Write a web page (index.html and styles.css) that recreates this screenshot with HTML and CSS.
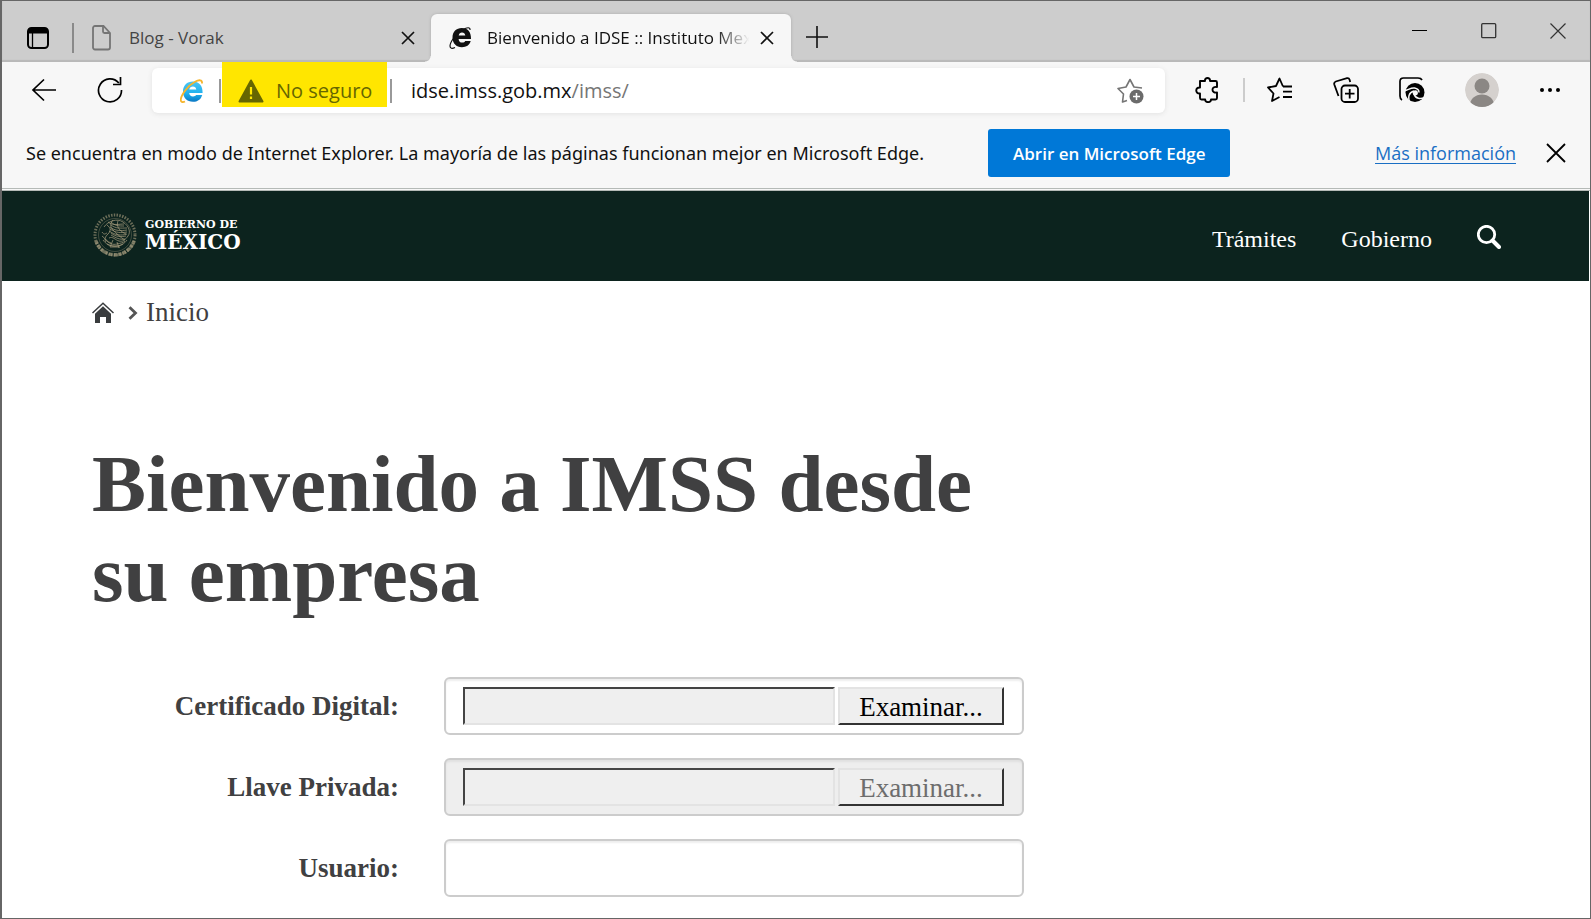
FILE: index.html
```html
<!DOCTYPE html>
<html lang="es">
<head>
<meta charset="utf-8">
<title>Bienvenido a IDSE :: Instituto Mexicano del Seguro Social</title>
<link rel="stylesheet" href="styles.css">
</head>
<body>
<div class="window">
  <div class="tabbar">
    <button class="icon-btn workspace" aria-label="Pestañas">
      <svg width="22" height="22" viewBox="0 0 22 22"><rect x="1" y="1" width="20" height="20" rx="3.500" fill="none" stroke="#000" stroke-width="2"/><path d="M1 6.500V4a3 3 0 0 1 3-3h14a3 3 0 0 1 3 3v2.500z"/><path d="M5.500 6v15" stroke="#000" stroke-width="1.300"/></svg>
    </button>
    <span class="tab-sep"></span>
    <div class="tab">
      <svg class="tab-icon" width="20" height="26" viewBox="0 0 20 26" fill="none" stroke="#757575" stroke-width="1.800"><path d="M1 3a2 2 0 0 1 2-2h8.500L18 8v14.500a2 2 0 0 1-2 2H3a2 2 0 0 1-2-2z"/><path d="M11 1v5.500a1.500 1.500 0 0 0 1.500 1.500H18"/></svg>
      <span class="tab-title">Blog - Vorak</span>
      <button class="icon-btn" aria-label="Cerrar pestaña"><svg width="14" height="14" viewBox="0 0 14 14" stroke="#111" stroke-width="1.700"><path d="M1 1l12 12M13 1L1 13"/></svg></button>
    </div>
    <div class="tab tab-active">
      <svg class="tab-icon" width="24" height="24" viewBox="0 0 24 24"><path fill="#111" fill-rule="evenodd" d="M3.500 11.500C3.500 5.800 7.300 2 12.800 2c5.800 0 9.400 3.700 9.200 11H9.600c.2 2.500 1.500 3.600 3.600 3.600 1.500 0 2.500-.5 3-1.600h5.500c-1.200 4.200-4.300 6.200-8.800 6.200-5.600 0-9.400-3.700-9.400-9.700zM9.700 9.500h6.600c-.3-2-1.400-3-3.300-3-1.800 0-3 1-3.300 3z"/><path d="M6 21.500c-3 1.500-5 1-5-1.500 0-4 6-12.500 13-16.500 4-2.300 7.500-2.500 7 .5" fill="none" stroke="#111" stroke-width="1.200"/></svg>
      <span class="tab-title">Bienvenido a IDSE :: Instituto Mex</span>
      <button class="icon-btn" aria-label="Cerrar pestaña"><svg width="14" height="14" viewBox="0 0 14 14" stroke="#111" stroke-width="1.700"><path d="M1 1l12 12M13 1L1 13"/></svg></button>
    </div>
    <button class="icon-btn new-tab" aria-label="Nueva pestaña"><svg width="22" height="22" viewBox="0 0 22 22" stroke="#111" stroke-width="1.600"><path d="M11 0v22M0 11h22"/></svg></button>
    <div class="window-controls">
      <button class="icon-btn" aria-label="Minimizar"><svg width="16" height="16" viewBox="0 0 16 16"><path d="M0 7.500h15" stroke="#000"/></svg></button>
      <button class="icon-btn" aria-label="Maximizar"><svg width="16" height="16" viewBox="0 0 16 16"><rect x=".7" y=".7" width="14" height="14" rx="1" fill="none" stroke="#333" stroke-width="1.300"/></svg></button>
      <button class="icon-btn" aria-label="Cerrar"><svg width="16" height="16" viewBox="0 0 16 16"><path d="M.5.500l15 15M15.500.500l-15 15" stroke="#333" stroke-width="1.200"/></svg></button>
    </div>
  </div>

  <div class="toolbar">
    <button class="icon-btn nav-btn" aria-label="Atrás"><svg width="26" height="24" viewBox="0 0 26 24" fill="none" stroke="#000" stroke-width="1.700"><path d="M13 1.500L2 12l11 10.500M2 12h23"/></svg></button>
    <button class="icon-btn nav-btn" aria-label="Actualizar"><svg width="26" height="26" viewBox="0 0 26 26" fill="none" stroke="#000" stroke-width="1.700"><path d="M24.500 13A11.500 11.500 0 1 1 21.800 6M23.500 0v7.500H16"/></svg></button>
    <div class="address">
      <svg class="ie-logo" width="24" height="24" viewBox="0 0 24 24"><defs><linearGradient id="ie" x1="0" y1="0" x2="0" y2="1"><stop offset="0" stop-color="#4cc6f4"/><stop offset=".6" stop-color="#1fb0ee"/><stop offset="1" stop-color="#0a78c4"/></linearGradient></defs><path fill="url(#ie)" fill-rule="evenodd" d="M3 12.500C3 6.500 7 2.500 12.800 2.500 19 2.500 22.800 6.500 22.600 14H9.200c.2 2.200 1.700 3.400 3.800 3.400 1.500 0 2.500-.4 3-1.400h6.200c-1.200 4.600-4.600 6.800-9.200 6.800-6 0-10-4.200-10-10.300zM9.300 10.500h7c-.3-2-1.500-3-3.400-3-1.900 0-3.300 1-3.600 3z"/><path d="M5 22.500c-2.500 1.200-4.500.5-4.200-2C1.400 15.500 8 6.500 15 2.800c4-2.300 7.500-2.300 7 1.700" fill="none" stroke="#f6b52c" stroke-width="1.800"/></svg>
      <span class="addr-sep"></span>
      <button class="security">
        <svg width="26" height="24" viewBox="0 0 26 24"><path d="M13 1.500L24.500 22.500h-23z" fill="#666600" stroke="#666600" stroke-width="2" stroke-linejoin="round"/><path d="M13 8v7.500M13 17.500v2.500" stroke="#ffe600" stroke-width="2.200"/></svg>
        <span>No seguro</span>
      </button>
      <span class="addr-sep"></span>
      <a class="url" href="#">idse.imss.gob.mx<span class="url-path">/imss/</span></a>
      <button class="icon-btn" aria-label="Agregar a favoritos"><svg width="28" height="26" viewBox="0 0 28 26"><path d="M10 22.500L5.500 24l1-8L1 10.500l8-1.500L13 1.500 17 9l8 1" fill="none" stroke="#757575" stroke-width="1.600" stroke-linejoin="round"/><circle cx="19.500" cy="18.500" r="7" fill="#6b6b6b"/><path d="M19.500 15v7M16 18.500h7" stroke="#fff" stroke-width="1.500"/></svg></button>
    </div>
    <div class="actions">
      <button class="icon-btn" aria-label="Extensiones"><svg width="26" height="26" viewBox="0 0 26 26" fill="none" stroke="#000" stroke-width="1.900" stroke-linejoin="round"><path d="M6 4h5c-.6-4 5.600-4 5 0h5.500q1.500 0 1.500 1.500V10c-6-1-6 6.500 0 5.500v5.500q0 1.500-1.500 1.500H17c.2 3.500-6 3.500-5.800 0H7.500Q6 22.500 6 21v-4.500c-5 .5-5-6.500 0-6z"/></svg></button>
      <span class="action-sep"></span>
      <button class="icon-btn" aria-label="Favoritos"><svg width="26" height="26" viewBox="0 0 26 26" fill="none" stroke="#000" stroke-width="1.800" stroke-linejoin="round"><path d="M16 9.500L12.500 1.500 9 9l-8 1.500 5.500 6L5 24l7.500-4"/><path d="M16 9.500h9M16 14.700h9M16 20h9"/></svg></button>
      <button class="icon-btn" aria-label="Colecciones"><svg width="26" height="26" viewBox="0 0 26 26" fill="none" stroke="#000" stroke-width="1.800"><path d="M5.500 19L1.300 7.500Q.700 5.300 2.800 4.500L14 1.200q2-.4 2.600 1.500l.6 2.300"/><rect x="8.500" y="8.500" width="16.500" height="16.500" rx="3.500"/><path d="M16.700 12v9.500M12 16.700h9.500"/></svg></button>
      <button class="icon-btn" aria-label="Modo Internet Explorer"><svg width="26" height="26" viewBox="0 0 26 26"><path d="M3 23Q1 22 1 19V4.500Q1 1 4.500 1H19q3 0 4 2" fill="none" stroke="#000" stroke-width="1.700"/><circle cx="16" cy="15.500" r="9.500"/><path d="M5.500 13.500c3 0 6-3 10-2.500 3 .5 4.500 2.500 4.500 4.500M10.500 25c-1.500-5-1-9.500 4.500-11M26 20.500c-4.500 1.800-9.500 1.500-11-3.500" fill="none" stroke="#f7f7f7" stroke-width="1.500"/><circle cx="16.300" cy="15.800" r="2.600" fill="#f7f7f7"/></svg></button>
      <button class="icon-btn" aria-label="Perfil"><svg width="34" height="34" viewBox="0 0 34 34"><defs><clipPath id="av"><circle cx="17" cy="17" r="17"/></clipPath></defs><g clip-path="url(#av)"><circle cx="17" cy="17" r="17" fill="#d5d1ce"/><circle cx="17" cy="13" r="7.500" fill="#8b8784"/><ellipse cx="17" cy="32" rx="12" ry="10.500" fill="#8b8784"/></g></svg></button>
      <button class="icon-btn" aria-label="Más opciones"><svg width="22" height="6" viewBox="0 0 22 6"><circle cx="3" cy="3" r="2"/><circle cx="11" cy="3" r="2"/><circle cx="19" cy="3" r="2"/></svg></button>
    </div>
  </div>

  <div class="notice">
    <p class="notice-text">Se encuentra en modo de Internet Explorer. La mayoría de las páginas funcionan mejor en Microsoft Edge.</p>
    <button class="open-edge">Abrir en Microsoft Edge</button>
    <a class="more-info" href="#">Más información</a>
    <button class="icon-btn" aria-label="Cerrar aviso"><svg width="20" height="20" viewBox="0 0 20 20" stroke="#000" stroke-width="1.800"><path d="M1 1l18 18M19 1L1 19"/></svg></button>
  </div>

  <header class="site-header">
    <a class="brand" href="#">
      <svg width="44" height="44" viewBox="0 0 44 44" fill="none" stroke="#a0977a"><circle cx="22" cy="22" r="20" stroke-width="3" stroke-dasharray="1.500 1.300" opacity=".65"/><path d="M3 28a20 20 0 0 0 38 0" stroke-width="3.500" stroke-dasharray="3.500 1.200" opacity=".7"/><circle cx="22" cy="22" r="16.500" stroke-width=".7" opacity=".5"/><path d="M11 14c4-6 13-9 19-5s8 10 5 14-5 6-9 5-6-5-10-3M14 12c4 3 4 6 1 9s-4 5-2 8M18 9c4 4 8 4 13 4M17 14c5 4 11 4 17 3M16 18c6 4 12 5 18 3M18 22c5 3 9 5 14 4M12 26c4 5 8 6 12 5s6-1 8-3M14 31c5 3 11 3 16 0M17 34h10M9 19c2 3 3 2 5 1M20 7c-3 3-3 7 0 10s8 8 12 10M25 8c-2 5 1 10 8 13M20 27l-3 7M24 29l2 6M15 9c5 4 11 2 16 2M18 12c5 4 10 3 16 3M17 16c6 4 11 4 17 3M18 20c5 4 10 4 15 3M9 23c3 2 5 6 9 7M10 27c3 4 6 6 12 6s9-2 12-6" stroke-width="1" opacity=".75"/></svg>
      <span class="brand-text"><span class="brand-small">GOBIERNO DE</span><span class="brand-big">MÉXICO</span></span>
    </a>
    <nav class="site-nav">
      <a href="#">Trámites</a>
      <a href="#">Gobierno</a>
      <a href="#" aria-label="Buscar"><svg width="24" height="24" viewBox="0 0 24 24" fill="none" stroke="#fff"><circle cx="9.500" cy="9.500" r="8.200" stroke-width="2.800"/><path d="M15.500 15.500l6.500 6.500" stroke-width="4" stroke-linecap="round"/></svg></a>
    </nav>
  </header>

  <main class="content">
    <nav class="breadcrumb">
      <a href="#" aria-label="Inicio"><svg width="22" height="22" viewBox="0 0 22 22"><path d="M.5 11L11 1.200 21.500 11" fill="none" stroke="#393c3e" stroke-width="1.500"/><path d="M11 4.300l8 7.500V21h-5v-6H8v6H3v-9.200z" fill="#393c3e"/></svg></a>
      <svg width="10" height="14" viewBox="0 0 10 14"><path d="M1.500 1.200L7.500 7l-6 5.800" fill="none" stroke="#555" stroke-width="2.800"/></svg>
      <span>Inicio</span>
    </nav>
    <h1>Bienvenido a IMSS desde su empresa</h1>
    <form class="login">
      <label for="cert">Certificado Digital:</label>
      <div class="field">
        <input class="file-path" id="cert" type="text" readonly>
        <button class="browse" type="button">Examinar...</button>
      </div>
      <label for="key">Llave Privada:</label>
      <div class="field field-disabled">
        <input class="file-path" id="key" type="text" disabled>
        <button class="browse" type="button" disabled>Examinar...</button>
      </div>
      <label for="user">Usuario:</label>
      <input class="field" id="user" type="text">
    </form>
  </main>
</div>
</body>
</html>
```
FILE: styles.css
```css
* { box-sizing: border-box; }

body {
  margin: 0;
  font-family: "Liberation Serif", "Times New Roman", serif;
  color: #404041;
  background: #fff;
}

button, input { font: inherit; color: inherit; }

svg { display: block; flex: none; }

.window {
  min-height: 100vh;
  border: 1px solid #666;
  border-left-width: 2px;
}

.tabbar, .toolbar, .notice {
  font-family: "Open Sans", "Noto Sans", sans-serif;
  display: flex;
  align-items: center;
}

.icon-btn {
  display: flex;
  flex: none;
  padding: 0;
  border: 0;
  background: none;
}

/* Tab strip */
.tabbar {
  height: 61px;
  padding: 13px 24px 0 25px;
  background: #cdcdcd;
  box-shadow: inset 0 -2px 1px #b9b9b9;
}

.tab-sep {
  width: 2px;
  height: 30px;
  margin-left: 23px;
  background: #8a8a8a;
}

.tab {
  display: flex;
  align-items: center;
  width: 357px;
  height: 48px;
  padding: 0 16px 0 18px;
  font-size: 17px;
  line-height: 24px;
  color: #444;
}

.tab-title {
  flex: 1;
  margin: 0 12px 0 17px;
  white-space: nowrap;
}

.tab-active {
  position: relative;
  width: 360px;
  background: #f7f7f7;
  border-radius: 6px 6px 0 0;
  box-shadow: 0 0 3px #aaa;
  color: #111;
  clip-path: inset(-4px -8px 0 -8px);
}

.tab-active .tab-title {
  margin: 0 8px 0 14px;
  mask-image: linear-gradient(to right, #000 86%, transparent 99%);
}

.tab-active .icon-btn { margin-right: 2px; }

.tab-active::before, .tab-active::after {
  content: "";
  position: absolute;
  bottom: 0;
  width: 6px;
  height: 6px;
}

.tab-active::before {
  left: -6px;
  background: radial-gradient(circle at 0 0, transparent 5px, #f7f7f7 6px);
}

.tab-active::after {
  right: -6px;
  background: radial-gradient(circle at 100% 0, transparent 5px, #f7f7f7 6px);
}

.new-tab { margin: 0 0 2px 15px; }

.window-controls {
  display: flex;
  gap: 53px;
  height: 48px;
  padding-top: 9px;
  margin-left: auto;
}

/* Toolbar */
.toolbar {
  height: 57px;
  padding: 0 29px;
  background: #f7f7f7;
}

.nav-btn { margin: 0 40px 2px 0; }
.nav-btn + .nav-btn { margin-right: 29px; }

.address {
  display: flex;
  flex: 1;
  align-items: center;
  height: 45px;
  padding: 0 20px 0 28px;
  background: #fff;
  border-radius: 6px;
  box-shadow: 0 1px 5px #e2e2e2;
  font-size: 20px;
}

.ie-logo { margin-right: 15px; }

.addr-sep {
  width: 2px;
  height: 24px;
  background: #999;
}

.security {
  display: flex;
  align-items: center;
  gap: 12px;
  width: 165px;
  height: 45px;
  margin: 0 3px 12px 1px;
  padding: 12px 0 0 16px;
  border: 0;
  background: #ffe600;
  color: #666600;
  white-space: nowrap;
}

.url {
  flex: 1;
  margin-left: 19px;
  color: #111;
  text-decoration: none;
}

.url-path { color: #767676; }

.actions {
  display: flex;
  align-items: center;
  gap: 40px;
  margin: 0 0 2px 29px;
}

.action-sep {
  width: 2px;
  height: 24px;
  margin: 0 -18px 0 -17px;
  background: #ccc;
}

/* Internet Explorer mode notice */
.notice {
  height: 72px;
  padding: 0 24px 1px;
  background: #f7f7f7;
  border-bottom: 3px double #b5bab7;
  font-size: 18px;
  color: #111;
  white-space: nowrap;
}

.notice-text {
  margin: 0 64px 0 0;
  font-family: "Noto Sans", sans-serif;
}

.open-edge {
  height: 48px;
  padding: 0 25px;
  border: 0;
  border-radius: 3px;
  background: #0078d7;
  color: #fff;
  font-size: 17px;
  font-weight: 600;
}

.more-info {
  margin: 0 30px 0 auto;
  color: #1a6fc4;
  text-underline-offset: 3px;
}

/* Government header */
.site-header {
  display: flex;
  align-items: center;
  justify-content: space-between;
  height: 90px;
  margin-right: 1px;
  padding: 0 88px 0 91px;
  background: #0c231e;
}

.brand {
  display: flex;
  align-items: center;
  gap: 8px;
  padding-bottom: 2px;
  color: #fff;
  text-decoration: none;
}

.brand-text {
  display: flex;
  flex-direction: column;
  font-family: "DejaVu Serif", serif;
  font-weight: bold;
}

.brand-small { font-size: 11px; line-height: 14px; }
.brand-big { font-size: 20px; line-height: 20px; }

.site-nav {
  display: flex;
  gap: 45px;
  padding-top: 6px;
}

.site-nav a {
  color: #fff;
  font-size: 24px;
  line-height: 28px;
  text-decoration: none;
}

/* Page content */
.content {
  max-width: 1022px;
  padding: 16px 0 20px 90px;
}

.breadcrumb {
  display: flex;
  align-items: center;
  gap: 14px;
  font-size: 27px;
  line-height: 31px;
}

.breadcrumb span { margin-left: -6px; }

h1 {
  margin: 111px 0 58px;
  font-size: 81px;
  line-height: 90px;
}

.login {
  display: grid;
  grid-template-columns: 307px 1fr;
  gap: 23px 45px;
  align-items: center;
}

.login label {
  font-size: 27px;
  font-weight: bold;
  text-align: right;
}

.field {
  display: flex;
  gap: 3px;
  width: 100%;
  height: 58px;
  padding: 8px 18px 8px 17px;
  background: #fff;
  border: 2px solid #ccc;
  border-radius: 6px;
  box-shadow: inset 0 2px 2px #eee;
  font-size: 27px;
}

.field-disabled {
  background: #eee;
  box-shadow: inset 0 2px 2px #e0e0e0;
}

.file-path {
  flex: 1;
  min-width: 0;
  height: 38px;
  background: #efefef;
  border: 2px solid;
  border-color: #444 #e3e3e3 #e3e3e3 #444;
}

.browse {
  width: 166px;
  height: 38px;
  padding: 0;
  background: #efefef;
  border: 2px solid;
  border-color: #e3e3e3 #333 #333 #e3e3e3;
  color: #000;
  line-height: 36px;
}

.browse:disabled { color: #6d6d6d; }
```
